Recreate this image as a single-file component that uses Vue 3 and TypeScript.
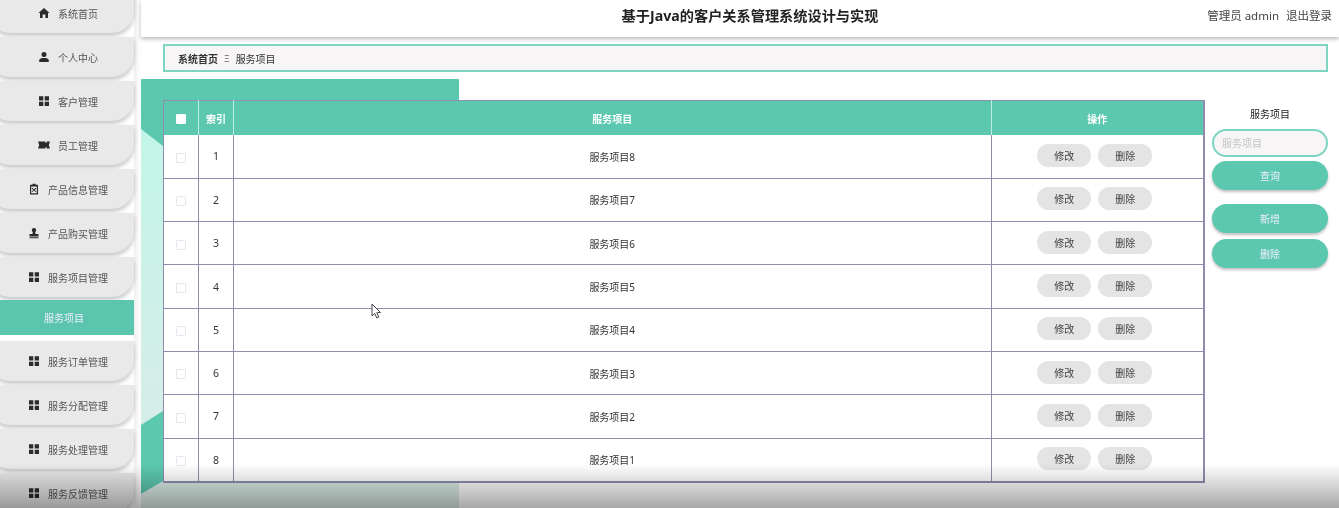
<script setup lang="ts">
type Icon = 'home' | 'user' | 'grid' | 'ticket' | 'clip' | 'stamp'
interface MenuItem { label: string; icon: Icon; active?: boolean }
const menu: MenuItem[] = [
  { label: '系统首页', icon: 'home' },
  { label: '个人中心', icon: 'user' },
  { label: '客户管理', icon: 'grid' },
  { label: '员工管理', icon: 'ticket' },
  { label: '产品信息管理', icon: 'clip' },
  { label: '产品购买管理', icon: 'stamp' },
  { label: '服务项目管理', icon: 'grid', active: true },
  { label: '服务订单管理', icon: 'grid' },
  { label: '服务分配管理', icon: 'grid' },
  { label: '服务处理管理', icon: 'grid' },
  { label: '服务反馈管理', icon: 'grid' }
]
const rows = [8, 7, 6, 5, 4, 3, 2, 1]
</script>

<template>
  <div class="page">
    <aside class="side">
      <template v-for="m in menu" :key="m.label">
        <div class="item">
          <svg class="ic" viewBox="0 0 12 12">
            <path v-if="m.icon === 'home'" d="M6 1 L11.5 6 L10 6 L10 11 L7.4 11 L7.4 7.6 L4.6 7.6 L4.6 11 L2 11 L2 6 L.5 6 Z" />
            <path v-else-if="m.icon === 'user'" d="M6 1a2.4 2.4 0 1 1 0 5a2.4 2.4 0 1 1 0-5Z M1.2 11 V9.2 C1.2 7.6 3.6 7 6 7 C8.400 7 10.800 7.600 10.800 9.200 V11 Z" />
            <path v-else-if="m.icon === 'grid'" d="M1 1.200h4.300v4.200h-4.300Z M6.700 1.200h4.300v4.200h-4.300Z M1 6.700h4.300v4.200h-4.300Z M6.700 6.700h4.300v4.200h-4.300Z" />
            <path v-else-if="m.icon === 'ticket'" d="M0 2.500h7.500v1.500h1v-1.500h3.500l-1.200 3.500l1.200 3.500h-3.500v-1.500h-1v1.500h-7.500l1.200-3.500Z" />
            <path v-else-if="m.icon === 'clip'" fill-rule="evenodd" d="M4.500 .8h3v1h2.500v9.700h-8v-9.700h2.500Z M3.200 3.500v6.700h5.600v-6.700Z M4.300 4.700l1.700 1.500l1.700-1.500l.6.7l-1.600 1.500l1.600 1.500l-.6.7l-1.700-1.500l-1.700 1.500l-.6-.7l1.600-1.500l-1.600-1.500Z" />
            <path v-else d="M6 1a2.200 2.200 0 0 1 1.500 3.800c-.4.500-.3 1.600.2 2.200h2.800v2.500h-9v-2.500h2.800c.5-.6.600-1.700.2-2.200a2.200 2.200 0 0 1 1.500-3.800Z M1.500 10.200h9v1h-9Z" />
          </svg>
          <span>{{ m.label }}</span>
        </div>
        <div v-if="m.active" class="sub">服务项目</div>
      </template>
    </aside>

    <main class="main">
      <header class="top">
        <h1>基于Java的客户关系管理系统设计与实现</h1>
        <div class="user"><span>管理员 admin</span><span>退出登录</span></div>
      </header>

      <nav class="crumb"><b>系统首页</b><i>Ξ</i><span>服务项目</span></nav>

      <section class="body">
        <svg class="deco" viewBox="0 0 318 429" width="318" height="429" aria-hidden="true">
          <defs>
            <linearGradient id="mint" x1="0" y1="0" x2="0" y2="1">
              <stop offset="0" stop-color="#bff7e8" />
              <stop offset="1" stop-color="#dcebe7" />
            </linearGradient>
          </defs>
          <rect width="318" height="429" fill="url(#mint)" />
          <polygon points="0,0 318,0 318,21 22,21 22,67 0,50" fill="#5cc8b0" />
          <polygon points="0,346 22,332 22,402 0,415" fill="#5cc8b0" />
        </svg>

        <table class="grid">
          <colgroup>
            <col class="c1" /><col class="c2" /><col /><col class="c4" />
          </colgroup>
          <thead>
            <tr>
              <th><span class="chk head"></span></th>
              <th>索引</th>
              <th>服务项目</th>
              <th>操作</th>
            </tr>
          </thead>
          <tbody>
            <tr v-for="(n, i) in rows" :key="n">
              <td><span class="chk"></span></td>
              <td class="idx">{{ i + 1 }}</td>
              <td>服务项目{{ n }}</td>
              <td class="ops"><button>修改</button><button>删除</button></td>
            </tr>
          </tbody>
        </table>

        <div class="panel">
          <label>服务项目</label>
          <div class="input">服务项目</div>
          <button class="pri">查询</button>
          <button class="pri gap">新增</button>
          <button class="pri">删除</button>
        </div>
      </section>
    </main>

    <svg class="cursor" viewBox="0 0 11 17" width="11" height="17" aria-hidden="true">
      <path d="M1 1 L1 13 L3.800 10.500 L5.800 15 L7.800 14 L5.800 9.700 L9.500 9.500 Z" fill="#fff" stroke="#444" stroke-width="1" />
    </svg>
    <div class="fade"></div>
  </div>
</template>

<style>
html, body { margin: 0; background: #fff; }
</style>

<style scoped>
.page {
  position: relative;
  display: flex;
  width: 1339px;
  height: 508px;
  overflow: hidden;
  background: #fff;
  font-family: "Noto Sans", "Noto Sans CJK SC", sans-serif;
  font-size: 10px;
  color: #333;
  filter: blur(0.35px);
}
.side {
  flex: 0 0 134px;
  width: 134px;
  margin-top: -7px;
  display: flex;
  flex-direction: column;
  box-shadow: 3px 0 5px rgba(0, 0, 0, 0.07);
}
.item {
  flex: 0 0 40px;
  height: 40px;
  margin: 0 0 4px -12px;
  width: 146px;
  padding-left: 14px;
  box-sizing: border-box;
  display: flex;
  align-items: center;
  justify-content: center;
  gap: 8px;
  background: #e9e9e9;
  border-radius: 0 0 22px 22px;
  box-shadow: 0 3px 4px rgba(0, 0, 0, 0.22);
  color: #555;
}
.ic { width: 12px; height: 12px; fill: #2b2b2b; flex: none; }
.sub {
  flex: 0 0 35px;
  margin: -1px 0 6px;
  padding-right: 6px;
  box-sizing: border-box;
  display: flex;
  align-items: center;
  justify-content: center;
  background: #5cc5ad;
  color: #eef;
}
.main { flex: 1; min-width: 0; margin-left: 7px; display: flex; flex-direction: column; }
.top {
  position: relative;
  flex: 0 0 37px;
  display: flex;
  align-items: center;
  justify-content: center;
  background: #fff;
  box-shadow: 0 2px 4px rgba(0, 0, 0, 0.28);
}
.top h1 { margin: -8px 0 0 20px; font-size: 14.2px; font-weight: 700; color: #222; }
.user {
  position: absolute;
  right: 7px;
  top: 7px;
  display: flex;
  gap: 7px;
  font-size: 11.5px;
  color: #444;
}
.crumb {
  margin: 7px 11px 0 22px;
  height: 28px;
  box-sizing: border-box;
  display: flex;
  align-items: center;
  padding-left: 13px;
  background: #f7f5f6;
  border: 2px solid #7ed6c2;
  color: #333;
}
.crumb i { font-style: normal; font-size: 9px; margin: 0 6px; color: #666; }
.crumb b { font-weight: 700; }
.body {
  position: relative;
  flex: 1;
  margin-top: 7px;
  padding: 21px 0 0 22px;
  display: flex;
  align-items: flex-start;
}
.deco { position: absolute; left: 0; top: 0; }
.grid {
  position: relative;
  flex: none;
  width: 1042px;
  table-layout: fixed;
  border-collapse: collapse;
  background: #fff;
  text-align: center;
  border-style: solid;
  border-color: #8f8dae;
  border-width: 1px 2px 2px 1px;
}
.c1 { width: 35px; }
.c2 { width: 35px; }
.c4 { width: 213px; }
th {
  height: 34px;
  padding: 0;
  background: #5cc8b0;
  color: #fff;
  font-weight: 700;
  border-left: 1px solid #bfeee2;
}
th:first-child { border-left: 0; }
td {
  height: 42.3px;
  padding: 0;
  border: 1px solid #8f8dae;
  border-top: 0;
  color: #333;
}
td:first-child { border-left: 0; }
td:last-child { border-right: 0; }
tbody tr:first-child td { height: 42.8px; }
.idx { font-size: 10.500px; }
.chk {
  display: inline-block;
  width: 8px;
  height: 8px;
  vertical-align: middle;
  border: 1px solid #e6e6ee;
  border-radius: 1px;
  background: #fff;
}
.chk.head { border-color: #fff; }
.ops { padding-right: 5px; box-sizing: border-box; }
.ops button {
  width: 54px;
  height: 23px;
  padding: 0;
  border: 0;
  border-radius: 12px;
  background: #e4e4e4;
  color: #444;
  font: inherit;
  vertical-align: middle;
  margin-bottom: 2px;
}
.ops button + button { margin-left: 7px; }
.panel {
  flex: none;
  width: 116px;
  margin-left: 7px;
  display: flex;
  flex-direction: column;
  position: relative;
}
.panel label { height: 29px; line-height: 28px; text-align: center; color: #222; }
.input {
  height: 28px;
  box-sizing: border-box;
  padding-left: 8px;
  line-height: 24px;
  background: #f7f5f6;
  border: 2px solid #7ed6c2;
  border-radius: 14px;
  color: #c4c4c8;
}
.pri {
  height: 29px;
  margin-top: 4px;
  padding: 0;
  border: 0;
  border-radius: 15px;
  background: #5cc8b0;
  color: #eef;
  font: inherit;
  box-shadow: 0 2px 3px rgba(0, 0, 0, 0.25);
}
.pri.gap { margin-top: 14px; }
.pri:last-child { margin-top: 6px; }
.cursor { position: absolute; left: 371px; top: 303px; }
.fade {
  position: absolute;
  left: 0;
  right: 0;
  bottom: 0;
  height: 44px;
  background: linear-gradient(to bottom, rgba(0, 0, 0, 0), rgba(0, 0, 0, 0.34));
  pointer-events: none;
}
</style>
